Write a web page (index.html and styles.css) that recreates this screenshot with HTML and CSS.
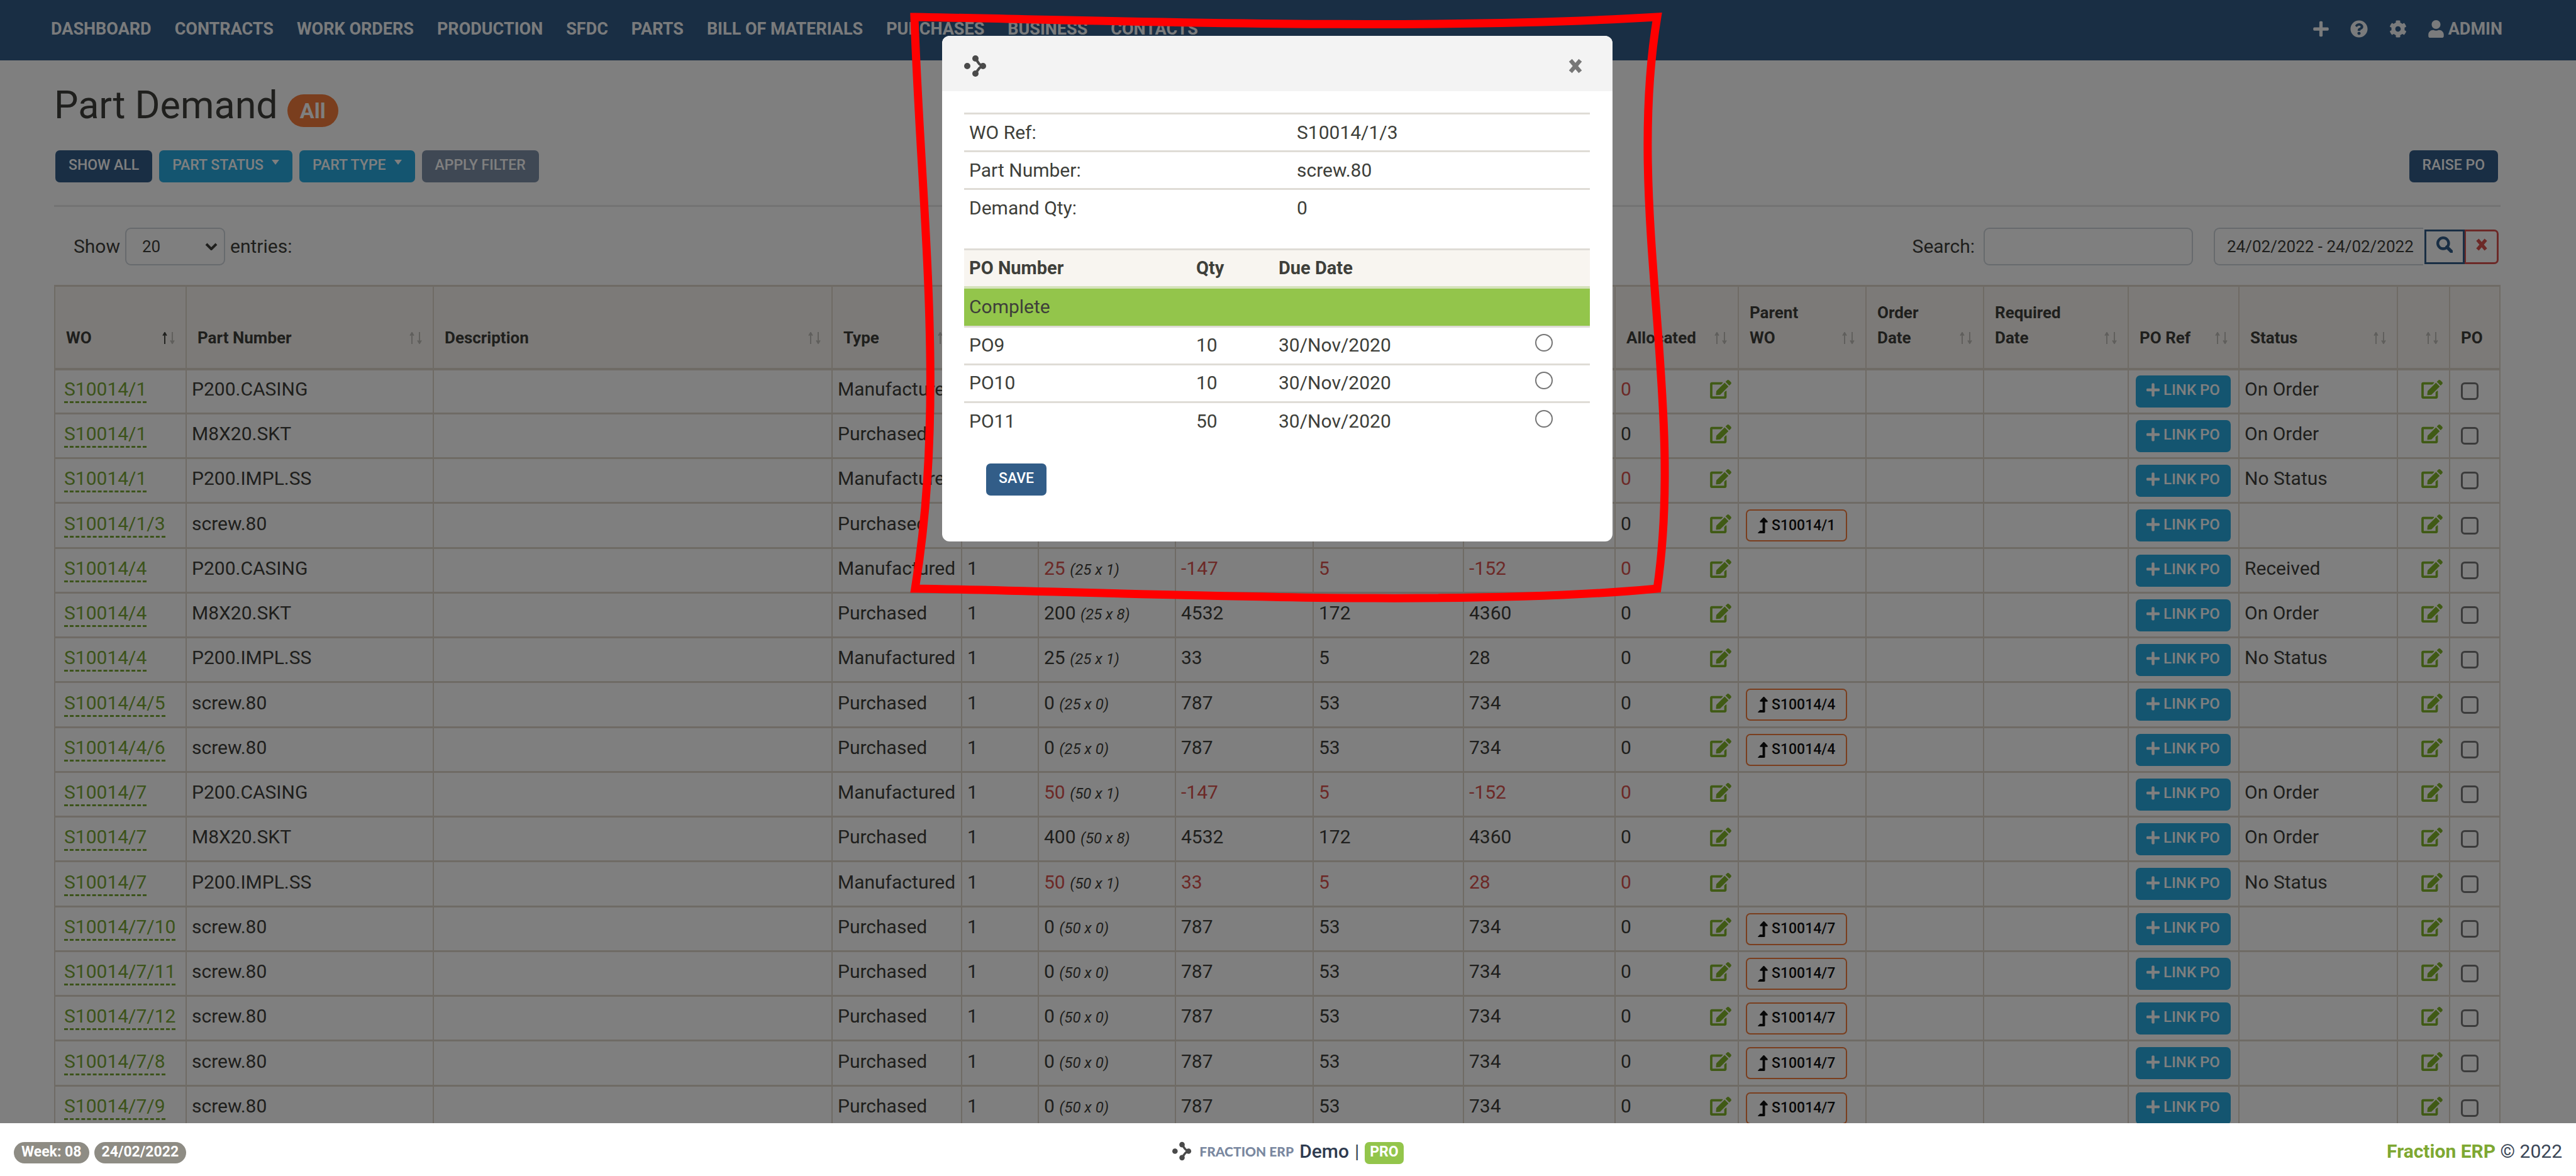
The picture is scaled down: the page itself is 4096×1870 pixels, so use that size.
FILE: index.html
```html
<!DOCTYPE html>
<html lang="en">
<head>
<meta charset="utf-8">
<title>Part Demand - Fraction ERP</title>
<link rel="stylesheet" href="styles.css">
</head>
<body>
<svg class="sprite" aria-hidden="true">
  <symbol id="i-plus" viewBox="0 0 448 512"><path d="M416 208H272V64c0-17.67-14.33-32-32-32h-32c-17.67 0-32 14.33-32 32v144H32c-17.67 0-32 14.33-32 32v32c0 17.67 14.33 32 32 32h144v144c0 17.67 14.33 32 32 32h32c17.67 0 32-14.33 32-32V304h144c17.67 0 32-14.33 32-32v-32c0-17.67-14.33-32-32-32z"/></symbol>
  <symbol id="i-help" viewBox="0 0 512 512"><path d="M504 256c0 136.997-111.043 248-248 248S8 392.997 8 256C8 119.083 119.043 8 256 8s248 111.083 248 248zM262.655 90c-54.497 0-89.255 22.957-116.549 63.758-3.536 5.286-2.353 12.415 2.715 16.258l34.699 26.31c5.205 3.947 12.621 3.008 16.665-2.122 17.864-22.658 30.113-35.797 57.303-35.797 20.429 0 45.698 13.148 45.698 32.958 0 14.976-12.363 22.667-32.534 33.976C247.128 238.528 216 254.941 216 296v4c0 6.627 5.373 12 12 12h56c6.627 0 12-5.373 12-12v-1.333c0-28.462 83.186-29.647 83.186-106.667 0-58.002-60.165-102-116.531-102zM256 338c-25.365 0-46 20.635-46 46 0 25.364 20.635 46 46 46s46-20.636 46-46c0-25.365-20.635-46-46-46z"/></symbol>
  <symbol id="i-cog" viewBox="0 0 512 512"><path d="M487.4 315.7l-42.6-24.6c4.3-23.2 4.3-47 0-70.2l42.6-24.6c4.9-2.8 7.1-8.6 5.5-14-11.1-35.6-30-67.8-54.7-94.6-3.8-4.1-10-5.1-14.8-2.3L380.8 110c-17.9-15.4-38.5-27.3-60.8-35.1V25.8c0-5.6-3.9-10.5-9.4-11.7-36.7-8.2-74.3-7.8-109.2 0-5.5 1.2-9.4 6.1-9.4 11.7V75c-22.2 7.9-42.8 19.8-60.8 35.1L88.7 85.5c-4.9-2.8-11-1.9-14.8 2.3-24.7 26.7-43.6 58.9-54.7 94.6-1.7 5.4.6 11.2 5.5 14L67.3 221c-4.3 23.2-4.3 47 0 70.2l-42.6 24.6c-4.9 2.8-7.1 8.6-5.5 14 11.1 35.6 30 67.8 54.7 94.6 3.8 4.1 10 5.1 14.8 2.3l42.6-24.6c17.9 15.4 38.5 27.3 60.8 35.1v49.2c0 5.6 3.9 10.5 9.4 11.7 36.7 8.2 74.3 7.8 109.2 0 5.5-1.2 9.4-6.1 9.4-11.7v-49.2c22.2-7.9 42.8-19.8 60.8-35.1l42.6 24.6c4.9 2.8 11 1.9 14.8-2.3 24.7-26.7 43.6-58.9 54.7-94.6 1.5-5.5-.7-11.3-5.6-14.1zM256 336c-44.1 0-80-35.9-80-80s35.9-80 80-80 80 35.9 80 80-35.9 80-80 80z"/></symbol>
  <symbol id="i-user" viewBox="0 0 448 512"><path d="M224 256c70.7 0 128-57.3 128-128S294.7 0 224 0 96 57.3 96 128s57.3 128 128 128zm89.6 32h-16.7c-22.2 10.2-46.9 16-72.9 16s-50.6-5.8-72.9-16h-16.7C60.2 288 0 348.2 0 422.4V464c0 26.5 21.5 48 48 48h352c26.5 0 48-21.5 48-48v-41.6c0-74.2-60.2-134.4-134.4-134.4z"/></symbol>
  <symbol id="i-edit" viewBox="0 0 576 512"><path d="M402.6 83.2l90.2 90.2c3.8 3.8 3.8 10 0 13.8L274.4 405.6l-92.8 10.3c-12.4 1.4-22.9-9.1-21.5-21.5l10.3-92.8L388.8 83.2c3.8-3.8 10-3.8 13.8 0zm162-22.9l-48.8-48.8c-15.2-15.2-39.9-15.2-55.2 0l-35.4 35.4c-3.8 3.8-3.8 10 0 13.8l90.2 90.2c3.8 3.8 10 3.8 13.8 0l35.4-35.4c15.2-15.3 15.2-40 0-55.2zM384 346.2V448H64V128h229.8c3.2 0 6.2-1.3 8.5-3.5l40-40c7.6-7.6 2.2-20.5-8.5-20.5H48C21.5 64 0 85.5 0 112v352c0 26.5 21.5 48 48 48h352c26.5 0 48-21.5 48-48V306.2c0-10.7-12.9-16-20.5-8.5l-40 40c-2.2 2.3-3.5 5.3-3.5 8.5z"/></symbol>
  <symbol id="i-up" viewBox="0 0 320 512"><path d="M313.553 119.669L209.587 7.666c-9.485-10.214-25.676-10.229-35.174 0L70.438 119.669C56.232 134.969 67.062 160 88.025 160H152v272H68.024a11.996 11.996 0 0 0-8.485 3.515l-56 56C-4.021 499.074 1.333 512 12.024 512H208c13.255 0 24-10.745 24-24V160h63.966c20.878 0 31.851-24.969 17.587-40.331z"/></symbol>
  <symbol id="i-search" viewBox="0 0 24 24"><circle cx="10" cy="10" r="8" fill="none" stroke="currentColor" stroke-width="4"/><path d="M15.500 15.500L22 22" fill="none" stroke="currentColor" stroke-width="5" stroke-linecap="round"/></symbol>
  <symbol id="i-times" viewBox="0 0 20 20"><path d="M4 3L16 17M16 3L4 17" fill="none" stroke="currentColor" stroke-width="5"/></symbol>
  <symbol id="i-asc" viewBox="0 0 8 20"><path d="M4 20V2M1 6L4 1L7 6" fill="none" stroke="currentColor" stroke-width="2"/></symbol>
  <symbol id="i-desc" viewBox="0 0 8 20"><path d="M4 0V18M1 14L4 19L7 14" fill="none" stroke="currentColor" stroke-width="2"/></symbol>
  <symbol id="i-logo" viewBox="0 0 36 36"><circle cx="5" cy="18" r="5"/><circle cx="18" cy="6" r="5"/><circle cx="30" cy="18" r="5"/><circle cx="18" cy="30" r="5"/><path d="M19 6C22 14 26 17 30 18C26 19 22 22 19 30" fill="none" stroke="currentColor" stroke-width="4"/></symbol>
</svg>

<header class="navbar">
  <nav class="nav-links">
    <a href="#">Dashboard</a><a href="#">Contracts</a><a href="#">Work Orders</a><a href="#">Production</a><a href="#">SFDC</a><a href="#">Parts</a><a href="#">Bill of Materials</a><a href="#">Purchases</a><a href="#">Business</a><a href="#">Contacts</a>
  </nav>
  <nav class="nav-tools">
    <a href="#" aria-label="Add"><svg class="ico-plus"><use href="#i-plus"/></svg></a>
    <a href="#" aria-label="Help"><svg class="ico-round"><use href="#i-help"/></svg></a>
    <a href="#" aria-label="Settings"><svg class="ico-round"><use href="#i-cog"/></svg></a>
    <a href="#"><svg class="ico-user"><use href="#i-user"/></svg>Admin</a>
  </nav>
</header>

<main class="page">
  <h1>Part Demand <span class="badge-all">All</span></h1>
  <div class="toolbar">
    <button class="btn primary" type="button">Show All</button>
    <button class="btn info" type="button">Part Status<span class="caret"></span></button>
    <button class="btn info" type="button">Part Type<span class="caret"></span></button>
    <button class="btn muted" type="button">Apply Filter</button>
    <button class="btn primary raise" type="button">Raise PO</button>
  </div>
  <hr>
  <div class="controls">
    <label for="length">Show</label>
    <select id="length" class="field"><option>20</option></select>
    <label for="length">entries:</label>
    <label class="search-label" for="search">Search:</label>
    <input id="search" class="field search" type="text">
    <input class="field range" type="text" value="24/02/2022 - 24/02/2022" aria-label="Date range">
    <button class="range-go" type="button" aria-label="Search dates"><svg><use href="#i-search"/></svg></button>
    <button class="range-clear" type="button" aria-label="Clear dates"><svg><use href="#i-times"/></svg></button>
  </div>

  <table class="demand">
    <colgroup>
      <col class="c-wo"><col class="c-part"><col class="c-desc"><col class="c-type"><col class="c-per"><col class="c-qty"><col class="c-stock"><col class="c-min"><col class="c-free"><col class="c-alloc"><col class="c-parent"><col class="c-order"><col class="c-req"><col class="c-ref"><col class="c-status"><col class="c-edit"><col class="c-po">
    </colgroup>
    <thead><tr id="heads"></tr></thead>
    <tbody id="rows"></tbody>
  </table>
</main>

<div class="backdrop">
  <section class="dialog" role="dialog" aria-modal="true" aria-label="Link PO">
    <header class="dialog-head">
      <svg class="logo"><use href="#i-logo"/></svg>
      <button class="close" type="button" aria-label="Close"><svg><use href="#i-times"/></svg></button>
    </header>
    <div class="dialog-body">
      <table class="facts">
        <tr><th scope="row">WO Ref:</th><td>S10014/1/3</td></tr>
        <tr><th scope="row">Part Number:</th><td>screw.80</td></tr>
        <tr><th scope="row">Demand Qty:</th><td>0</td></tr>
      </table>
      <table class="orders">
        <colgroup><col class="o-num"><col class="o-qty"><col class="o-date"><col></colgroup>
        <thead><tr><th>PO Number</th><th>Qty</th><th>Due Date</th><th></th></tr></thead>
        <tbody>
          <tr class="group"><td colspan="4">Complete</td></tr>
          <tr><td>PO9</td><td>10</td><td>30/Nov/2020</td><td><input type="radio" name="po" aria-label="PO9"></td></tr>
          <tr><td>PO10</td><td>10</td><td>30/Nov/2020</td><td><input type="radio" name="po" aria-label="PO10"></td></tr>
          <tr><td>PO11</td><td>50</td><td>30/Nov/2020</td><td><input type="radio" name="po" aria-label="PO11"></td></tr>
        </tbody>
      </table>
      <button class="btn primary save" type="button">Save</button>
    </div>
    <svg class="marker" viewBox="0 0 1240 980" aria-hidden="true"><path d="M14 17C310 22 810 40 1195 17C1145 320 1239 623 1195 926C860 958 310 930 15 926C65 623 24 320 14 17Z" fill="none" stroke="#f00" stroke-width="13"/></svg>
  </section>
</div>

<footer class="footer">
  <div class="foot-left"><span class="pill">Week: 08</span><span class="pill">24/02/2022</span></div>
  <div class="foot-mid"><svg class="logo"><use href="#i-logo"/></svg><span class="brand">FRACTION ERP</span><span class="demo">Demo</span><span>|</span><span class="pro">PRO</span></div>
  <div class="foot-right"><a href="#">Fraction ERP</a> © 2022</div>
</footer>
<script src="app.js"></script>
</body>
</html>
```
FILE: app.js
```js
const heads = ["WO", "Part Number", "Description", "Type", "Per", "Demand", "Stock", "Min", "Free", "Allocated",
  "Parent<br>WO", "Order<br>Date", "Required<br>Date", "PO Ref", "Status", "", "PO"];

const stock = {
  "P200.CASING": ["Manufactured", -147, 5, -152],
  "M8X20.SKT": ["Purchased", 4532, 172, 4360],
  "P200.IMPL.SS": ["Manufactured", 33, 5, 28],
  "screw.80": ["Purchased", 787, 53, 734]
};

// work order, part, batch size, quantity per batch, short of stock, parent, status
const rows = [
  ["S10014/1", "P200.CASING", 25, 1, true, "", "On Order"],
  ["S10014/1", "M8X20.SKT", 25, 8, false, "", "On Order"],
  ["S10014/1", "P200.IMPL.SS", 25, 1, true, "", "No Status"],
  ["S10014/1/3", "screw.80", 25, 0, false, "S10014/1", ""],
  ["S10014/4", "P200.CASING", 25, 1, true, "", "Received"],
  ["S10014/4", "M8X20.SKT", 25, 8, false, "", "On Order"],
  ["S10014/4", "P200.IMPL.SS", 25, 1, false, "", "No Status"],
  ["S10014/4/5", "screw.80", 25, 0, false, "S10014/4", ""],
  ["S10014/4/6", "screw.80", 25, 0, false, "S10014/4", ""],
  ["S10014/7", "P200.CASING", 50, 1, true, "", "On Order"],
  ["S10014/7", "M8X20.SKT", 50, 8, false, "", "On Order"],
  ["S10014/7", "P200.IMPL.SS", 50, 1, true, "", "No Status"],
  ["S10014/7/10", "screw.80", 50, 0, false, "S10014/7", ""],
  ["S10014/7/11", "screw.80", 50, 0, false, "S10014/7", ""],
  ["S10014/7/12", "screw.80", 50, 0, false, "S10014/7", ""],
  ["S10014/7/8", "screw.80", 50, 0, false, "S10014/7", ""],
  ["S10014/7/9", "screw.80", 50, 0, false, "S10014/7", ""]
];

const icon = (name, cls) => `<svg class="${cls}"><use href="#i-${name}"/></svg>`;
const edit = `<a class="edit" href="#" aria-label="Edit">${icon("edit", "ico-edit")}</a>`;

document.getElementById("heads").innerHTML = heads.map((h, i) => {
  const sort = i < heads.length - 1
    ? `<span class="sort${i === 0 ? " asc" : ""}">${icon("asc", "up")}${icon("desc", "down")}</span>` : "";
  return `<th scope="col">${h}${sort}</th>`;
}).join("");

document.getElementById("rows").innerHTML = rows.map(([wo, part, batch, per, short, parent, status]) => {
  const [type, inStock, min, free] = stock[part];
  const num = short ? "short" : "";
  const up = parent ? `<button class="btn parent" type="button">${icon("up", "ico-up")}${parent}</button>` : "";
  return `<tr>
    <td class="wo"><a href="#">${wo}</a></td><td>${part}</td><td></td><td>${type}</td><td>1</td>
    <td><span class="${num}">${batch * per}</span> <em>(${batch} x ${per})</em></td>
    <td class="${num}">${inStock}</td><td class="${num}">${min}</td><td class="${num}">${free}</td>
    <td class="${num}"><div class="split">0${edit}</div></td>
    <td class="act">${up}</td><td></td><td></td>
    <td class="act"><button class="btn info link" type="button">${icon("plus", "ico-link")}Link PO</button></td>
    <td>${status}</td><td><div class="split end">${edit}</div></td>
    <td class="tick"><input type="checkbox" aria-label="Select ${wo} ${part}"></td></tr>`;
}).join("");
```
FILE: styles.css
```css
* { box-sizing: border-box; }
body { margin: 0; min-height: 100vh; background: #fff; color: #3e3f3a; font-family: Roboto, "Liberation Sans", sans-serif; font-size: 30px; line-height: 1; overflow: hidden; }
svg { fill: currentColor; flex: none; display: block; }
button, input, select { font-family: inherit; margin: 0; }
a { text-decoration: none; }
.sprite { position: absolute; width: 0; height: 0; }

.navbar { display: flex; align-items: center; justify-content: space-between; height: 96px; padding: 0 117px 4px 81px; background: #325d88; }
.navbar a { color: #fff; font-size: 27px; font-weight: 700; text-transform: uppercase; opacity: .95; }
.nav-links { display: flex; align-items: center; gap: 37px; }
.nav-tools { display: flex; align-items: center; gap: 34px; }
.nav-tools a { display: flex; align-items: center; gap: 7px; }
.ico-plus { width: 25px; height: 28px; }
.ico-round { width: 28px; height: 28px; }
.ico-user { width: 25px; height: 28px; }

.page { padding: 34px 120px 0 86px; }
h1 { margin: 0; font-size: 61px; line-height: 74px; font-weight: 400; color: #3e3f3a; }
.badge-all { display: inline-block; padding: 9px 20px; border-radius: 26px; background: #f47c3c; color: #fff; font-size: 34px; line-height: 34px; font-weight: 700; }
.toolbar { display: flex; gap: 11px; margin-top: 35px; padding: 0 4px 0 2px; }
.btn { display: inline-flex; align-items: center; justify-content: center; height: 51px; padding: 0 20px 4px; border: 0; border-radius: 7px; color: #fff; font-size: 23px; line-height: 24px; font-weight: 500; text-transform: uppercase; white-space: nowrap; }
.toolbar .btn { padding: 0 21px 4px; }
.primary { background: #325d88; }
.info { background: #29abe0; }
.muted { background: #7e90a8; }
.raise { margin-left: auto; }
.caret { width: 0; height: 0; margin: -10px 0 0 13px; border: 6px solid transparent; border-top: 8px solid #fff; border-bottom: 0; }
hr { height: 3px; margin: 36px 0 33px; border: 0; background: #e6e6e6; }

.controls { display: flex; align-items: center; height: 60px; margin-bottom: 31px; padding: 0 3px 0 31px; }
.field { height: 60px; border: 2px solid #ced4da; border-radius: 9px; background: #fff; color: #3e3f3a; font-size: 26px; padding: 0 20px; }
select.field { width: 159px; margin: 0 8px; padding: 0 25px; appearance: none; background: #fff url("data:image/svg+xml,%3Csvg xmlns='http://www.w3.org/2000/svg' viewBox='0 0 20 12'%3E%3Cpath d='M2 2l8 8 8-8' fill='none' stroke='%233e3f3a' stroke-width='4'/%3E%3C/svg%3E") no-repeat right 10px center / 20px 12px; }
.search-label { margin-left: auto; }
.search { width: 333px; margin: 0 33px 0 14px; }
.range { width: 333px; border-radius: 9px 0 0 9px; border-right: 0; padding: 0 0 0 19px; }
.range-go, .range-clear { display: flex; align-items: center; justify-content: center; height: 55px; padding: 0 0 6px; background: #fff; border: 3px solid #325d88; color: #325d88; }
.range-go { width: 64px; margin-left: 2px; }
.range-go svg { width: 26px; height: 26px; }
.range-clear { width: 54px; border-color: #d9534f; color: #d9534f; border-radius: 0 7px 7px 0; border-left-width: 2px; }
.range-clear svg { width: 26px; height: 22px; }

.demand { width: 100%; table-layout: fixed; border-collapse: collapse; }
.c-wo { width: 209px; } .c-part { width: 393px; } .c-desc { width: 634px; } .c-type { width: 206px; }
.c-per { width: 122px; } .c-qty { width: 218px; } .c-stock { width: 219px; } .c-min { width: 239px; }
.c-free { width: 241px; } .c-alloc { width: 196px; } .c-parent { width: 203px; } .c-order { width: 187px; }
.c-req { width: 230px; } .c-ref { width: 176px; } .c-status { width: 252px; } .c-edit { width: 83px; } .c-po { width: 80px; }
.demand th { position: relative; height: 132px; padding: 0 17px 28px; border: solid #dfd7ca; border-width: 3px 2px 4px; background: #f8f5f0; text-align: left; vertical-align: bottom; font-size: 26px; line-height: 40px; font-weight: 700; }
.sort { position: absolute; right: 17px; bottom: 38px; display: flex; gap: 4px; color: #3e3f3a; }
.sort svg { width: 8px; height: 19px; opacity: .3; }
.sort.asc .up { opacity: 1; }
.demand td { height: 71px; padding: 0 10px 6px 8px; border: solid #dfd7ca; border-width: 3px 2px; white-space: nowrap; }
.demand tr:nth-child(4n) td { height: 72px; }
.demand td.wo { padding-left: 14px; }
.wo a { color: #79a736; border-bottom: 3px dashed #79a736; padding-bottom: 2px; }
.demand em { font-size: 24px; }
.demand .short { color: #d9534f; }
.split { display: flex; align-items: center; justify-content: space-between; }
.split.end { justify-content: flex-end; }
.edit { color: #80b52a; }
.ico-edit { width: 34px; height: 30px; }
.demand td.act { padding: 0 11px; }
.parent { border: 2px solid #f47c3c; background: #fff; color: #111; padding: 0 17px; gap: 6px; }
.ico-up { width: 16px; height: 25px; }
.link { width: 151px; padding: 0 0 4px; gap: 6px; font-size: 24px; }
.ico-link { width: 21px; height: 24px; }
.demand td.tick { padding: 0 0 0 17px; }
input[type=checkbox] { display: block; width: 28px; height: 28px; appearance: none; border: 3px solid #767676; border-radius: 6px; background: #fff; }

.backdrop { position: fixed; inset: 0; padding: 57px 34px 0 0; background: rgba(0, 0, 0, .5); }
.dialog { position: relative; width: 1066px; margin: 0 auto; border-radius: 12px; background: #fff; }
.dialog-head { display: flex; align-items: center; justify-content: space-between; height: 88px; padding: 8px 46px 0 35px; border-radius: 12px 12px 0 0; background: #f3f3f3; }
.logo { width: 36px; height: 36px; color: #4a4a4a; }
.close { display: flex; padding: 0; border: 0; background: none; color: #777; }
.close svg { width: 26px; height: 26px; }
.dialog-body { padding: 34px 36px 73px 35px; }
.facts, .orders { width: 100%; border-collapse: collapse; table-layout: fixed; text-align: left; }
.facts { margin-bottom: 34px; }
.facts th, .facts td { height: 60px; padding: 0 8px; border-top: 3px solid #dfdcd6; font-weight: 400; }
.facts th { width: 521px; }
.o-num { width: 361px; } .o-qty { width: 131px; } .o-date { width: 400px; }
.orders th { height: 61px; padding: 0 8px; border-top: 3px solid #dfdcd6; border-bottom: 4px solid #d5e2bb; background: #f8f5f0; font-size: 29px; font-weight: 700; }
.orders td { height: 60px; padding: 0 8px; border-top: 3px solid #dfdcd6; }
.orders .group td { height: 62px; border: 0; background: #93c54b; }
input[type=radio] { display: block; width: 28px; height: 28px; margin: -8px 0 0 8px; appearance: none; border: 2px solid #767676; border-radius: 50%; }
.save { margin: 38px 0 0 35px; }
.marker { position: absolute; left: -58px; top: -47px; width: 1240px; height: 980px; }

.footer { position: fixed; left: 0; right: 0; bottom: 0; display: grid; grid-template-columns: 1fr auto 1fr; align-items: center; height: 84px; padding: 5px 22px 0; background: #fff; color: #3a4656; }
.foot-left { display: flex; gap: 8px; padding-top: 5px; }
.pill { height: 34px; padding: 0 12px; border-radius: 17px; background: #8e8c84; color: #fff; font-size: 23px; line-height: 31px; font-weight: 700; }
.foot-mid { display: flex; align-items: center; gap: 9px; }
.foot-mid .logo { width: 31px; height: 31px; }
.brand { font-family: Lato, "Open Sans", sans-serif; font-size: 21px; font-weight: 900; color: #7a88a0; padding-left: 3px; }
.demo { font-weight: 500; color: #2f3b4f; }
.pro { height: 35px; margin-top: 5px; padding: 0 8px; border-radius: 7px; background: #93c54b; color: #fff; font-size: 23px; line-height: 32px; font-weight: 700; }
.foot-right { justify-self: end; }
.foot-right a { color: #7ea832; font-weight: 700; }
```
